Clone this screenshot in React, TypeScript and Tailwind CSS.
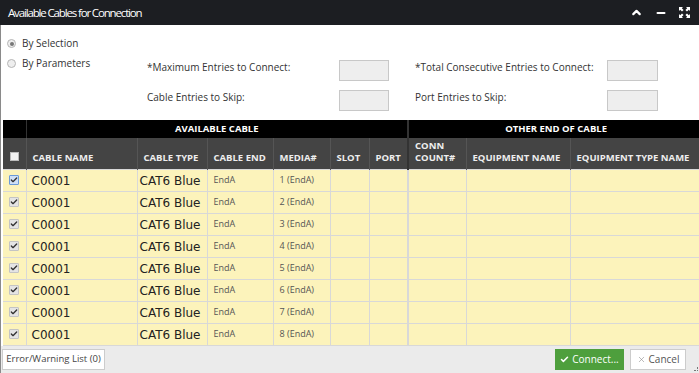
import { ChevronUp, Minus, Check, X } from 'lucide-react';

const cols = [
  { key: 'chk', w: 23 },
  { key: 'name', w: 111, label: 'CABLE NAME' },
  { key: 'type', w: 70, label: 'CABLE TYPE' },
  { key: 'end', w: 66, label: 'CABLE END' },
  { key: 'media', w: 57, label: 'MEDIA#' },
  { key: 'slot', w: 39, label: 'SLOT' },
  { key: 'port', w: 39, label: 'PORT' },
  { key: 'conn', w: 58, label: 'CONN COUNT#' },
  { key: 'eq', w: 104, label: 'EQUIPMENT NAME' },
  { key: 'eqt', w: 133, label: 'EQUIPMENT TYPE NAME' },
];

const rows = [1, 2, 3, 4, 5, 6, 7, 8];

const ExpandIcon = () => (
  <svg width="11" height="11" viewBox="0 0 11 11" fill="#fff">
    <path d="M0 0h4L2.8 1.2 4.6 3 3 4.6 1.2 2.8 0 4z" />
    <path d="M11 0v4L9.8 2.8 8 4.6 6.4 3 8.2 1.2 7 0z" />
    <path d="M0 11V7l1.2 1.2L3 6.4 4.6 8 2.8 9.8 4 11z" />
    <path d="M11 11H7l1.2-1.2L6.4 8 8 6.4l1.8 1.8L11 7z" />
  </svg>
);

const RowCheck = ({ focus }: { focus?: boolean }) => (
  <div
    className={`w-[10px] h-[10px] flex items-center justify-center rounded-[1px] border ${
      focus ? 'border-[#6a9ad8] bg-[#cfe0f6]' : 'border-[#c4c4c4] bg-[#e4e4e4]'
    }`}
  >
    <Check className="w-[8px] h-[8px] text-[#333]" strokeWidth={4} />
  </div>
);

export default function App() {
  return (
    <div className="w-[699px] h-[373px] overflow-hidden bg-white flex flex-col font-['Open_Sans',sans-serif] text-[#333]">
      {/* title bar */}
      <div className="h-[25px] shrink-0 bg-[#1c1e22] flex items-center justify-between pl-[8px] pr-[9px]">
        <span className="text-white text-[11.5px] tracking-[-1.15px]">Available Cables for Connection</span>
        <div className="flex items-center gap-[12px]">
          <ChevronUp className="w-[13px] h-[13px] text-white" strokeWidth={4} />
          <Minus className="w-[12px] h-[12px] text-white" strokeWidth={4} />
          <ExpandIcon />
        </div>
      </div>

      <div className="flex-1 flex flex-col border-l border-[#8a8a8a] min-h-0">
        {/* options */}
        <div className="h-[95px] shrink-0 flex text-[10px]">
          <div className="w-[146px] pl-[6px] pt-[12px] flex flex-col gap-[6px]">
            <label className="flex items-center gap-[6px] h-[13px]">
              <span className="w-[9px] h-[9px] rounded-full border border-[#b5b5b5] bg-[#eee] flex items-center justify-center">
                <span className="w-[4px] h-[4px] rounded-full bg-[#777]" />
              </span>
              By Selection
            </label>
            <label className="flex items-center gap-[6px] h-[13px] mt-[1px]">
              <span className="w-[9px] h-[9px] rounded-full border border-[#b5b5b5] bg-[#eee]" />
              By Parameters
            </label>
          </div>
          <div className="pt-[35px] grid grid-cols-[192px_50px_26px_192px_51px] grid-rows-[21px_21px] gap-y-[9px]">
            <span className="leading-[13px] pt-[1px]">*Maximum Entries to Connect:</span>
            <div className="h-[21px] border border-[#c8c8c8] bg-[#eee]" />
            <span />
            <span className="leading-[13px] pt-[1px]">*Total Consecutive Entries to Connect:</span>
            <div className="h-[21px] border border-[#c8c8c8] bg-[#eee]" />
            <span className="leading-[13px] pt-[1px]">Cable Entries to Skip:</span>
            <div className="h-[21px] border border-[#c8c8c8] bg-[#eee]" />
            <span />
            <span className="leading-[13px] pt-[1px]">Port Entries to Skip:</span>
            <div className="h-[21px] border border-[#c8c8c8] bg-[#eee]" />
          </div>
        </div>

        {/* table */}
        <div className="ml-[2px] shrink-0">
          <table className="table-fixed border-collapse w-[700px]">
            <colgroup>
              {cols.map((c) => (
                <col key={c.key} style={{ width: c.w }} />
              ))}
            </colgroup>
            <thead>
              <tr className="h-[18px] bg-black text-white text-[9.5px] font-bold">
                <th className="border-r border-[#333]" />
                <th colSpan={6} className="text-center border-r-2 border-[#333] font-bold">AVAILABLE CABLE</th>
                <th colSpan={3} className="text-center font-bold">OTHER END OF CABLE</th>
              </tr>
              <tr className="h-[31px] bg-[#444] text-[#eee] text-[9.5px] font-bold">
                <th className="border-r border-[#555]">
                  <div className="w-[9px] h-[9px] mx-auto bg-[#f2f2f2] border border-[#bbb] mt-[6px]" />
                </th>
                {cols.slice(1).map((c) => (
                  <th
                    key={c.key}
                    className={`text-left align-bottom pb-[5px] px-[6px] leading-[12px] font-bold whitespace-nowrap overflow-hidden border-r ${
                      c.key === 'port' ? 'border-r-2 border-[#333]' : 'border-[#555]'
                    }`}
                  >
                    {c.key === 'conn' ? (
                      <>
                        CONN
                        <br />
                        COUNT#
                      </>
                    ) : (
                      c.label
                    )}
                  </th>
                ))}
              </tr>
            </thead>
            <tbody>
              {rows.map((n) => (
                <tr key={n} className="h-[22px] bg-[#fcf3bb]">
                  <td className="border border-[#d8d8d8] border-l-0">
                    <div className="flex justify-center">
                      <RowCheck focus={n === 1} />
                    </div>
                  </td>
                  <td className="border border-[#d8d8d8] pl-[5px] pt-[2px] font-['DejaVu_Sans',sans-serif] text-[12px] text-[#222]">
                    C0001
                  </td>
                  <td className="border border-[#d8d8d8] pl-[2px] pt-[2px] font-['DejaVu_Sans',sans-serif] text-[12px] text-[#222] whitespace-nowrap">
                    CAT6 Blue
                  </td>
                  <td className="border border-[#d8d8d8] pl-[6px] align-top pt-[3px] text-[9px] text-[#555]">EndA</td>
                  <td className="border border-[#d8d8d8] pl-[6px] align-top pt-[3px] text-[9px] text-[#555] whitespace-nowrap">
                    {n} (EndA)
                  </td>
                  <td className="border border-[#d8d8d8]" />
                  <td className="border border-[#d8d8d8] border-r-2" />
                  <td className="border border-[#d8d8d8]" />
                  <td className="border border-[#d8d8d8]" />
                  <td className="border border-[#d8d8d8]" />
                </tr>
              ))}
            </tbody>
          </table>
        </div>

        {/* footer */}
        <div className="flex-1 bg-[#ebebeb] flex items-start justify-between pt-[3px] pl-[1px] pr-[13px] relative">
          <button className="h-[21px] w-[103px] bg-white border border-[#ccc] text-[9.5px] text-[#444] whitespace-nowrap">
            Error/Warning List (0)
          </button>
          <div className="flex gap-[6px]">
            <button className="h-[21px] w-[69px] bg-[#4e9f3d] text-white text-[10px] flex items-center justify-center gap-[3px]">
              <Check className="w-[9px] h-[9px]" strokeWidth={4} />
              Connect...
            </button>
            <button className="h-[21px] w-[56px] bg-white border border-[#ccc] text-[10px] text-[#555] flex items-center justify-center gap-[3px]">
              <X className="w-[9px] h-[9px] text-[#888]" strokeWidth={1.5} />
              Cancel
            </button>
          </div>
          <div className="absolute right-[1px] bottom-[2px] w-[4px] h-[4px] border-r border-b border-dotted border-[#777]" />
        </div>
      </div>
    </div>
  );
}
